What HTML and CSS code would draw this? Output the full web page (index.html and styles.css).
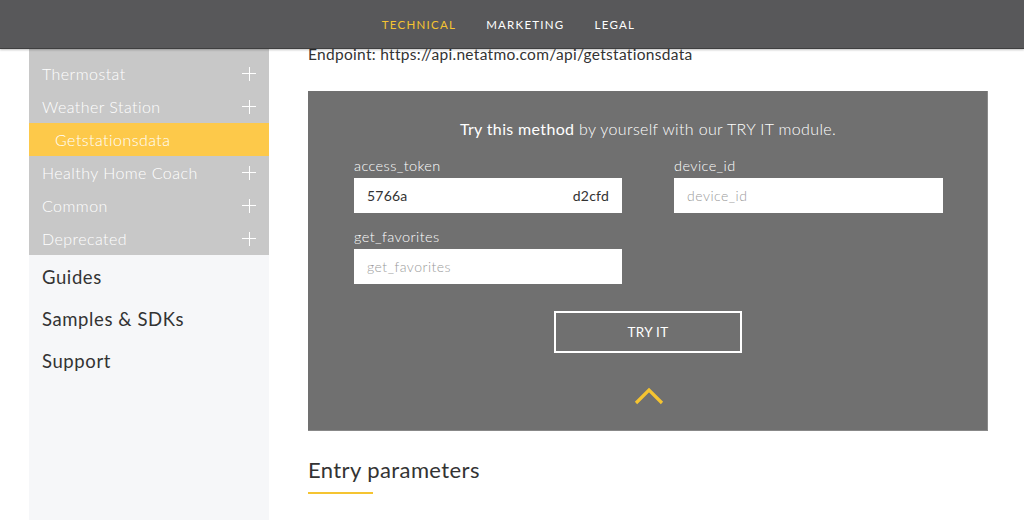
FILE: index.html
```html
<!DOCTYPE html>
<html>
<head>
<meta charset="utf-8">
<link rel="stylesheet" href="styles.css">
</head>
<body>
<header class="topnav">
  <a class="nav-item active">TECHNICAL</a>
  <a class="nav-item">MARKETING</a>
  <a class="nav-item">LEGAL</a>
</header>
<div class="page">
  <aside class="sidebar">
    <ul class="sub-menu">
      <li class="sub-item"><span>Thermostat</span><i class="plus"></i></li>
      <li class="sub-item"><span>Weather Station</span><i class="plus"></i></li>
      <li class="sub-item active"><span>Getstationsdata</span></li>
      <li class="sub-item"><span>Healthy Home Coach</span><i class="plus"></i></li>
      <li class="sub-item"><span>Common</span><i class="plus"></i></li>
      <li class="sub-item"><span>Deprecated</span><i class="plus"></i></li>
    </ul>
    <ul class="main-menu">
      <li>Guides</li>
      <li>Samples &amp; SDKs</li>
      <li>Support</li>
    </ul>
  </aside>
  <main class="content">
    <p class="endpoint">Endpoint: https://api.netatmo.com/api/getstationsdata</p>
    <section class="tryit">
      <p class="tryit-title"><span class="strong">Try this method</span> by yourself with our TRY IT module.</p>
      <div class="fields">
        <div class="field">
          <label>access_token</label>
          <div class="input filled"><span>5766a</span><span>d2cfd</span></div>
        </div>
        <div class="field">
          <label>device_id</label>
          <div class="input placeholder">device_id</div>
        </div>
        <div class="field">
          <label>get_favorites</label>
          <div class="input placeholder">get_favorites</div>
        </div>
      </div>
      <div class="actions"><button class="btn">TRY IT</button></div>
      <div class="chevron">
        <svg width="30" height="18" viewBox="0 0 30 18"><path d="M2 16 L15 3 L28 16" fill="none" stroke="#f5c431" stroke-width="3.2"/></svg>
      </div>
    </section>
    <h2 class="section-title">Entry parameters</h2>
  </main>
</div>
</body>
</html>
```
FILE: styles.css
```css
* { box-sizing: border-box; }
html, body { margin: 0; padding: 0; }
body {
  font-family: "Lato", "Open Sans", "Liberation Sans", sans-serif;
  background: #fff;
  color: #333;
  width: 1024px;
  height: 521px;
  overflow: hidden;
}
.topnav {
  height: 49px;
  background: #58585a;
  border-bottom: 1px solid #3f3f40;
  display: flex;
  justify-content: center;
  align-items: center;
  gap: 30px;
  padding-right: 7px;
  position: relative;
  z-index: 2;
  box-shadow: 0 1px 2px rgba(0,0,0,0.25);
}
.nav-item {
  color: #fff;
  font-size: 11.5px;
  letter-spacing: 1.25px;
  font-weight: 400;
}
.nav-item.active { color: #f5c431; }
.page {
  display: flex;
  height: 472px;
  margin-top: -1px;
}
.sidebar {
  margin-left: 29px;
  width: 240px;
  background: #f6f7f9;
}
.sidebar ul { list-style: none; margin: 0; padding: 0; }
.sidebar .sub-menu {
  background: #c8c8c8;
  padding-top: 9px;
}
.sub-item {
  height: 33px;
  display: flex;
  align-items: center;
  justify-content: space-between;
  padding: 0 13px 0 13px;
  color: #fff;
  font-size: 16px;
  letter-spacing: 0.45px;
  font-weight: 300;
}
.sub-item.active {
  background: #fdc94a;
  padding-left: 26px;
}
.plus {
  width: 14px;
  height: 14px;
  position: relative;
  display: block;
}
.plus::before, .plus::after {
  content: "";
  position: absolute;
  background: #fff;
}
.plus::before { left: 0; right: 0; top: 6.5px; height: 1px; }
.plus::after { top: 0; bottom: 0; left: 6.5px; width: 1px; }
.sidebar .main-menu { padding-top: 1px; }
.main-menu li {
  height: 42px;
  display: flex;
  align-items: center;
  padding-left: 13px;
  font-size: 18.5px;
  letter-spacing: 0.6px;
  color: #333;
}
.content {
  margin-left: 39px;
  width: 680px;
}
.endpoint {
  margin: 0;
  font-size: 15.5px;
  letter-spacing: 0.3px;
  line-height: 18px;
  color: #333;
  position: relative;
  top: -3px;
}
.tryit {
  margin-top: 25px;
  height: 340px;
  background: #707070;
  border-right: 1px solid #8a8a8a;
  border-bottom: 1px solid #888;
  padding: 28px 45px 0 46px;
  color: #fff;
}
.tryit-title {
  margin: 0;
  text-align: center;
  font-size: 16px;
  letter-spacing: 0.35px;
  font-weight: 300;
  line-height: 20px;
}
.tryit-title .strong { font-weight: 400; }
.fields {
  margin-top: 18px;
  display: grid;
  grid-template-columns: 268px 269px;
  column-gap: 52px;
  row-gap: 15px;
}
.field label {
  display: block;
  font-size: 14.5px;
  letter-spacing: 0.4px;
  font-weight: 300;
  line-height: 17px;
  height: 21px;
}
.input {
  height: 35px;
  background: #fff;
  display: flex;
  align-items: center;
  padding: 0 13px;
  font-size: 14px;
}
.input.filled { justify-content: space-between; color: #333; letter-spacing: 0.2px; }
.input.placeholder { color: #9a9a9a; font-weight: 300; letter-spacing: 0.5px; }
.actions {
  display: flex;
  justify-content: center;
  margin-top: 27px;
}
.btn {
  width: 188px;
  height: 42px;
  background: transparent;
  border: 2px solid #fff;
  color: #fff;
  font-family: inherit;
  font-size: 13.5px;
  letter-spacing: 0.3px;
  font-weight: 400;
}
.chevron {
  display: flex;
  justify-content: center;
  margin-top: 34px;
  padding-left: 2px;
}
.section-title {
  margin: 26px 0 0 0;
  font-size: 22px;
  letter-spacing: 0.4px;
  font-weight: 400;
  color: #333;
  line-height: 26px;
  display: inline-block;
}
.section-title::after {
  content: "";
  display: block;
  width: 65px;
  height: 2px;
  background: #f5c431;
  margin-top: 9px;
}
```
